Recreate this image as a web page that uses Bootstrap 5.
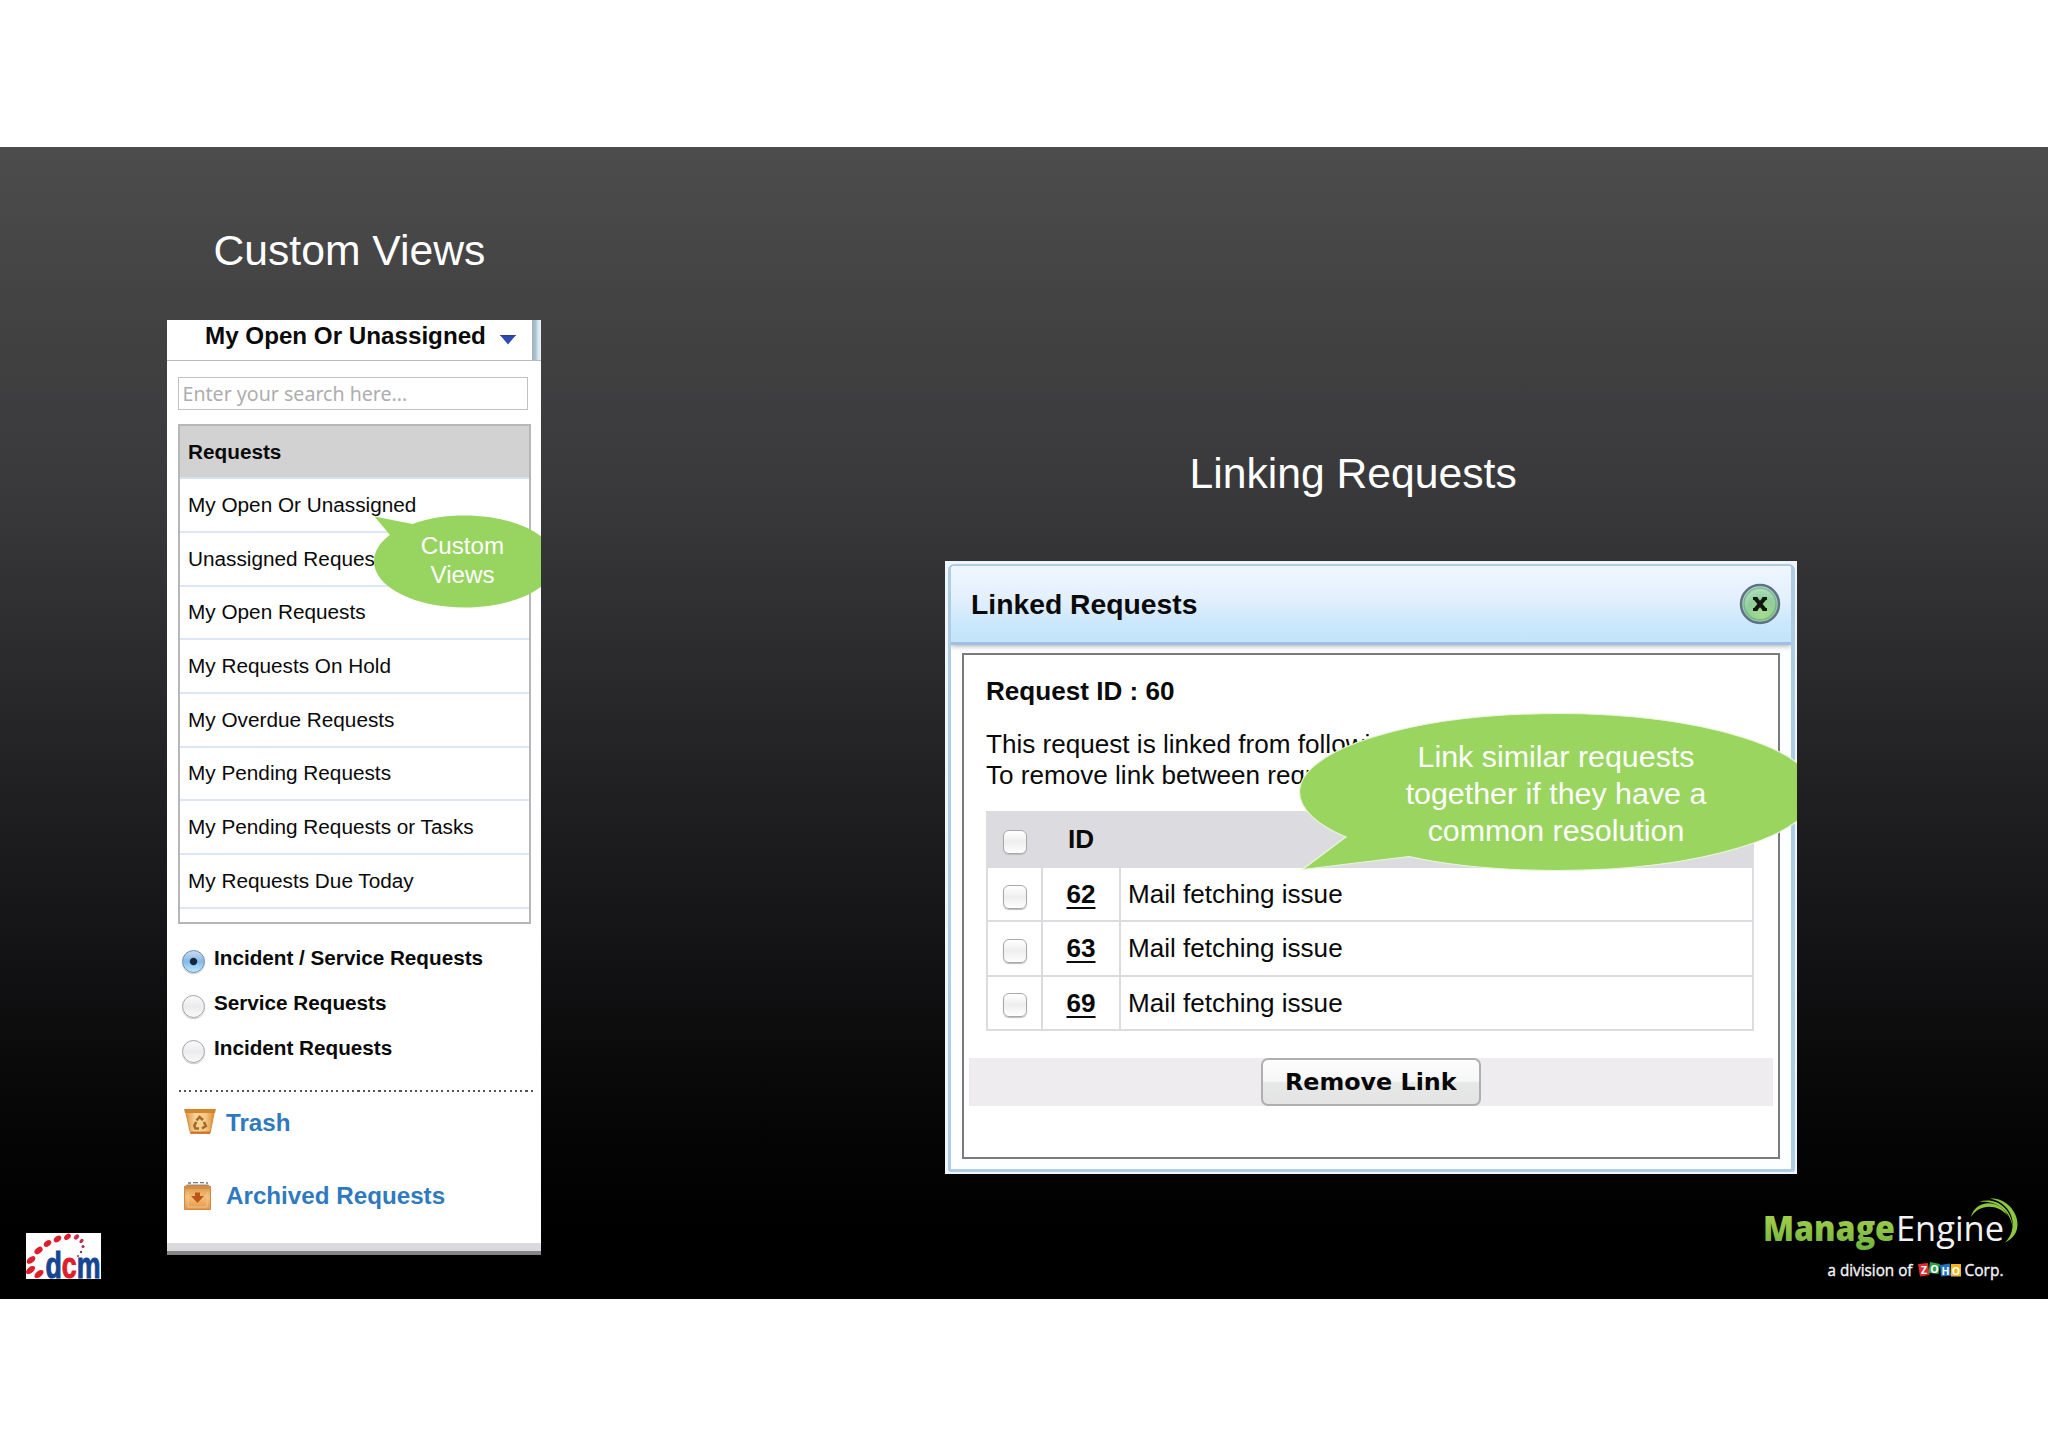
<!DOCTYPE html>
<html lang="en">
<head>
<meta charset="utf-8">
<title>Custom Views and Linking Requests</title>
<link href="https://cdn.jsdelivr.net/npm/bootstrap@5.3.0/dist/css/bootstrap.min.css" rel="stylesheet">
<style>
body{font-family:"Liberation Sans",Arial,sans-serif;color:#0a0a0a;background:#fff}
.page-wrap{height:1447px;padding-top:147px;overflow:hidden}
.slide{height:1152px;background:linear-gradient(#4c4c4c 0,#39383a 30%,#1d1c1e 59%,#060607 84%,#000 94%)}
.slide-title{font-size:42.67px;line-height:48px;color:#fff;white-space:nowrap;margin:0;font-weight:400}
.brand-left{width:167px;padding:0 0 20px 26px}
.views-col{width:374px;padding-top:79px}
.views-col .slide-title{padding-left:46.5px;margin-bottom:46px}
.views-panel{height:935px;background:#fff;overflow:hidden}
.views-head{height:41px;border-bottom:1px solid #b9b9bc;padding-left:38px;font-size:24.2px;line-height:31px}
.views-head svg{margin:15px 0 0 14px}
.head-edge{width:9px;height:40px;background:linear-gradient(90deg,#a9b1b6,#a7c0cd 35%,#d5e6ef 70%,#e9f2f7)}
.search-box{margin:16px 0 0 10.5px;width:350px;height:33px;border:1.5px solid #c2c2c5;border-radius:0;padding:0 0 0 4px;font:19.6px/30px "Noto Sans","Open Sans",sans-serif;color:#333}
.search-box::placeholder{color:#adadb0;opacity:1}
.view-list{margin:14px 0 0 10.5px;width:353px;height:500px;border:2px solid #b7b7ba;border-radius:0;overflow:hidden;font-size:20.75px}
.view-list .list-group-item{height:53.67px;flex:none;padding:0 0 0 8.5px;border:0;border-bottom:2px solid #dbe7f6;color:#0a0a0a;line-height:24px;display:flex;align-items:center;border-radius:0}
.view-list .list-title{height:53.3px;background:#d3d2d3;font-weight:700;border-bottom-color:#d3e3ee}
.kinds{margin-top:11px;padding-left:15px;font-size:20.7px;font-weight:700}
.kinds label{height:45px;gap:9px}
.kinds .form-check-input{width:23px;height:23px;margin:8px 0 0;border:1.5px solid #a4a4a8;background:linear-gradient(#fbfbfc,#ebebed 50%,#fafafa);box-shadow:0 1px 1px #ccc}
.kinds .form-check-input:checked{border-color:#7689a5;background:radial-gradient(circle,#14283e 0 3.2px,transparent 4.2px),linear-gradient(#c9dcf1,#85b9e8 50%,#b9eaff)}
.dots{margin:20px 0 0 12px;width:356px;height:2px;background:repeating-linear-gradient(90deg,#555 0 2px,transparent 2px 5.25px)}
.side-link{color:#2f7abf;font-size:24.2px;font-weight:700;text-decoration:none;padding-left:17px;height:62px}
.side-link svg{width:32px;margin-right:10px}
.side-link+.side-link{height:84px}
.panel-foot{height:12px;background:linear-gradient(#dadadc 0 7.5px,#858587 7.5px)}
.views-bubble{left:206px;top:194px;width:180px;height:96px}
.bubble-copy{color:#fff;text-align:center}
.views-bubble .bubble-copy{left:0;width:179px;top:17px;font-size:24.2px;line-height:29.4px}
.link-col{margin-left:404px;width:1103px;padding-top:302px}
.link-col .slide-title{padding-left:244.5px;margin-bottom:64px}
.link-panel{width:851.5px;height:613px;background:#eef6fb;padding:3px 2px 2px 3px;overflow:hidden}
.link-frame{border:solid #afcde2;border-width:2px 4px 3px 3px;border-radius:6px 6px 3px 3px;background:#fcfeff;overflow:hidden}
.link-head{height:79px;border-bottom:3px solid #9fc0e2;background:linear-gradient(#eff7ff,#e2effc 45%,#c9e7fd 78%,#c3e4fa);padding:0 10px 0 20px;font-size:28.3px;box-shadow:0 1px 5px #aaa}
.link-box{margin:8px 11px 0 11px;height:506px;border:2px solid #7b7b7f;background:#fff;padding-top:21px;font-size:26.1px;line-height:30.3px}
.link-box p{margin:0 0 0 22px;white-space:nowrap}
.link-box .link-note{margin-top:23px}
.link-table{margin:21px 0 0 22px;width:768px;border-collapse:collapse}
.link-table td,.link-table th{border:2px solid #dcdce0;height:54.4px;padding:0;line-height:30px;vertical-align:middle}
.link-table th{background:#dcdce0;height:55px}
.link-table .pick{width:55px;text-align:center}
.link-table .num{width:78px;text-align:center;font-weight:700}
.link-table .topic{padding-left:7px}
.link-table .num a{color:inherit;text-decoration:underline;text-decoration-thickness:2px;text-underline-offset:4px;text-decoration-skip-ink:none}
.link-table .form-check-input{width:24px;height:24px;margin:1px 0 0;border:1.5px solid #a9a9ad;border-radius:6px;background:linear-gradient(#fff,#eee 50%,#fff);display:inline-block;vertical-align:middle;box-shadow:0 1px 1px #bbb}
.link-actions{margin:27px 5px 0;height:48px;background:#eeecee}
.btn-remove{width:220px;height:48px;padding:0;border:2px solid #afafb1;border-radius:7px;font:700 23.8px/42px "DejaVu Sans",sans-serif;background:linear-gradient(#fdfdfd 0,#f6f6f6 48%,#e6e7e7 52%,#e4e4e4 100%);color:#080808}
.link-bubble{left:353px;top:151px;width:520px;height:162px}
.link-bubble .bubble-copy{left:0;width:516px;top:26px;font-size:30.4px;line-height:37.1px}
.brand-right{margin:18px 0 0 810px}
</style>
</head>
<body>
<div class="page-wrap">
<main class="slide d-flex align-items-start">
  <div class="brand-left align-self-end">
    <svg class="d-block overflow-visible" width="75" height="46" viewBox="0 0 75 46" aria-label="dcm">
      <rect width="75" height="46" fill="#fff"/>
      <g fill="#e01d2b">
        <ellipse cx="13" cy="41" rx="5.3" ry="3" transform="rotate(-40 13 41)"/>
        <ellipse cx="4.5" cy="37" rx="5.3" ry="3" transform="rotate(-40 4.5 37)"/>
        <ellipse cx="5" cy="27" rx="5" ry="3" transform="rotate(-38 5 27)"/>
        <ellipse cx="12.5" cy="17.5" rx="4.6" ry="3" transform="rotate(-38 12.5 17.5)"/>
        <ellipse cx="21.5" cy="10.5" rx="4.2" ry="2.7" transform="rotate(-38 21.5 10.5)"/>
        <ellipse cx="31.5" cy="6" rx="4.2" ry="2.7" transform="rotate(-38 31.5 6)"/>
        <ellipse cx="41.5" cy="3.8" rx="3.8" ry="2.5" transform="rotate(-38 41.5 3.8)"/>
      </g>
      <g fill="#c4304e"><ellipse cx="50.5" cy="4" rx="3" ry="2.1" transform="rotate(-45 50.5 4)"/><ellipse cx="55.5" cy="8" rx="2.5" ry="1.7" transform="rotate(-45 55.5 8)"/></g>
      <g fill="#94335f"><circle cx="57" cy="13.5" r="1.5"/><circle cx="55" cy="19" r="1.2"/><circle cx="52" cy="23" r="1"/></g>
      <text x="19.5" y="45" textLength="55" lengthAdjust="spacingAndGlyphs" font-family="Liberation Sans" font-weight="700" font-size="36" stroke-width="1" fill="#164493" stroke="#164493">d<tspan fill="#e01d2b" stroke="#e01d2b">c</tspan>m</text>
    </svg>
  </div>

  <section class="views-col">
    <h1 class="slide-title">Custom Views</h1>
    <div class="views-panel position-relative d-flex flex-column">
      <div class="views-head d-flex fw-bold flex-shrink-0">
        <span class="text-nowrap">My Open Or Unassigned</span>
        <svg width="16" height="10" viewBox="0 0 16 10"><path d="M0 0h16L8 9.500z" fill="#2c4db5"/><path d="M0 0h16l-1.500 1.500h-13z" fill="#31418a"/></svg>
        <span class="head-edge ms-auto"></span>
      </div>
      <input class="search-box form-control flex-shrink-0" type="text" placeholder="Enter your search here...">
      <div class="view-list list-group flex-shrink-0">
        <div class="list-group-item list-title">Requests</div>
        <div class="list-group-item">My Open Or Unassigned</div>
        <div class="list-group-item">Unassigned Requests</div>
        <div class="list-group-item">My Open Requests</div>
        <div class="list-group-item">My Requests On Hold</div>
        <div class="list-group-item">My Overdue Requests</div>
        <div class="list-group-item">My Pending Requests</div>
        <div class="list-group-item">My Pending Requests or Tasks</div>
        <div class="list-group-item">My Requests Due Today</div>
      </div>
      <div class="kinds">
        <label class="d-flex align-items-center"><input class="form-check-input" type="radio" name="kind" checked>Incident / Service Requests</label>
        <label class="d-flex align-items-center"><input class="form-check-input" type="radio" name="kind">Service Requests</label>
        <label class="d-flex align-items-center"><input class="form-check-input" type="radio" name="kind">Incident Requests</label>
      </div>
      <div class="dots flex-shrink-0"></div>
      <a class="side-link d-flex align-items-center" href="#">
        <svg height="28" viewBox="0 0 32 28">
          <defs><linearGradient id="bin" x2="1"><stop stop-color="#dd9645"/><stop offset=".35" stop-color="#f6d79a"/><stop offset=".7" stop-color="#f3c980"/><stop offset="1" stop-color="#d98b36"/></linearGradient></defs>
          <path d="M1.500 2h29l-4.500 22.500H6.500z" fill="url(#bin)" stroke="#d58a3b"/>
          <path d="M0 0h32l-1 4H1z" fill="#d6852f"/>
          <path d="M7 23.500h19" stroke="#c9772a" stroke-width="2"/>
          <path d="M12.500 11.500l3-3.500 3.500 3M20 13l1.800 4-3.800 2.500M15 19.500h-3.500l-1.200-3 2-3.500" fill="none" stroke="#a6682d" stroke-width="2.600"/>
        </svg>Trash</a>
      <a class="side-link d-flex align-items-center" href="#">
        <svg height="28" viewBox="0 0 32 28">
          <defs><linearGradient id="box" x2="0" y2="1"><stop stop-color="#df9a4e"/><stop offset=".45" stop-color="#f3c077"/><stop offset="1" stop-color="#e3954a"/></linearGradient></defs>
          <path d="M3 2.500h21L27 5H0z" fill="#a98a68"/>
          <path d="M4 1h3m2-.5h5m2 0h4m2 .5h2" stroke="#777" stroke-width="1.400"/>
          <path d="M.5 5h26v22.500H.5z" fill="url(#box)" stroke="#d18a45"/>
          <path d="M0 4h27v3H0z" fill="#d58d44"/>
          <path d="M4 10v15h19V10" fill="none" stroke="#efc58b"/>
          <path d="M11 10.500h5v3.500h4L13.500 21 7 14h4z" fill="#bb5716"/>
        </svg>Archived Requests</a>
      <div class="panel-foot mt-auto flex-shrink-0"></div>
      <div class="views-bubble position-absolute">
        <svg class="d-block" width="180" height="96" viewBox="0 0 180 96"><path d="M1.500 2.500L39.500 10C55 4 73 1.500 92 1.500c50.300 0 91 20.600 91 46s-40.700 46-91 46-91-20.600-91-46c0-10 6-19.500 16-26.500z" fill="#97d460"/></svg>
        <div class="bubble-copy position-absolute">Custom<br>Views</div>
      </div>
    </div>
  </section>

  <section class="link-col">
    <h1 class="slide-title">Linking Requests</h1>
    <div class="link-panel position-relative">
      <div class="link-frame h-100">
        <div class="link-head d-flex align-items-center justify-content-between fw-bold">
          <span>Linked Requests</span>
          <svg width="42" height="42" viewBox="0 0 42 42">
            <defs><radialGradient id="orb" cx=".55" cy=".75" r=".8"><stop stop-color="#a5dc8c"/><stop offset=".5" stop-color="#8fcd9a"/><stop offset="1" stop-color="#c2e6d4"/></radialGradient></defs>
            <circle cx="21" cy="21" r="19" fill="url(#orb)" stroke="#5d7288" stroke-width="2.500"/>
            <circle cx="21" cy="21" r="16" fill="none" stroke="#6fa583" stroke-width="1.500" opacity=".7"/>
            <path d="M16.500 15.500l9 11m0-11l-9 11" stroke="#10180f" stroke-width="4.200"/>
            <path d="M14 15.500h4.500m5 0H28M14 26.500h4.500m5 0H28" stroke="#10180f" stroke-width="2.800"/>
          </svg>
        </div>
        <div class="link-box">
          <p class="fw-bold">Request ID : 60</p>
          <p class="link-note">This request is linked from following<br>To remove link between requests</p>
          <table class="link-table">
            <tr><th class="pick"><input class="form-check-input" type="checkbox"></th><th class="num">ID</th><th></th></tr>
            <tr><td class="pick"><input class="form-check-input" type="checkbox"></td><td class="num"><a href="#">62</a></td><td class="topic">Mail fetching issue</td></tr>
            <tr><td class="pick"><input class="form-check-input" type="checkbox"></td><td class="num"><a href="#">63</a></td><td class="topic">Mail fetching issue</td></tr>
            <tr><td class="pick"><input class="form-check-input" type="checkbox"></td><td class="num"><a href="#">69</a></td><td class="topic">Mail fetching issue</td></tr>
          </table>
          <div class="link-actions d-flex justify-content-center"><button class="btn btn-remove" type="button">Remove Link</button></div>
        </div>
      </div>
      <div class="link-bubble position-absolute">
        <svg class="d-block" width="520" height="162" viewBox="0 0 520 162"><path d="M4.500 157.500L48 125C19 113 1.500 97 1.500 80c0-43.400 115.500-78.500 258-78.500s258 35.100 258 78.500-115.500 78.500-258 78.500c-56 0-108-5-148.500-14z" fill="#99d55f" stroke="#e9f7d9" stroke-width="1.200"/></svg>
        <div class="bubble-copy position-absolute">Link similar requests<br>together if they have a<br>common resolution</div>
      </div>
    </div>
    <svg class="brand-right d-block" width="275" height="100" viewBox="1755 1192 275 100" aria-label="ManageEngine">
      <defs><linearGradient id="leaf" x2="0" y2="1"><stop offset=".2" stop-color="#a5cf4c"/><stop offset="1" stop-color="#6cb33f"/></linearGradient></defs>
      <g font-family="Open Sans" font-size="34.500">
        <text x="1763" y="1241.300" font-weight="800" textLength="132" lengthAdjust="spacingAndGlyphs" fill="url(#leaf)">Manage</text>
        <text x="1896" y="1241.300" textLength="108" lengthAdjust="spacingAndGlyphs" fill="#f2f2f4">Engine</text>
      </g>
      <g fill="#8dc63f">
        <path d="M1971 1217c4-17 28-19 37-1-11-13-29-12-37 1z"/>
        <path d="M1979 1202c14-5 32 3 34 26-3-18-17-28-34-26z"/>
        <path d="M1990 1198.500c24-2 40 33 15 44 14-13 9-39-15-44z"/>
      </g>
      <g font-family="Open Sans" font-size="16.500" fill="#f4f4f4" stroke="#f4f4f4" stroke-width=".4">
        <text x="1827.500" y="1276" textLength="85" lengthAdjust="spacingAndGlyphs">a division of</text>
        <text x="1964.500" y="1276" textLength="39" lengthAdjust="spacingAndGlyphs">Corp.</text>
      </g>
      <path d="M1918 1264l10-1 1.500 12-9.500 1.500z" fill="#e02b32"/>
      <path d="M1930 1262l10 2-1.500 10-10-1z" fill="#2aa24c"/>
      <path d="M1940 1265l10-1.500 1 12-10 1z" fill="#2273c4"/>
      <path d="M1951 1264h10v12.500h-10z" fill="#f3b51d"/>
      <g font-family="Open Sans" font-weight="700" font-size="10.500" fill="#fff" text-anchor="middle"><text x="1924" y="1274">Z</text><text x="1934.500" y="1272.500">O</text><text x="1945.500" y="1274.500">H</text><text x="1956" y="1274.500">O</text></g>
    </svg>
  </section>
</main>
</div>
<script src="https://cdn.jsdelivr.net/npm/bootstrap@5.3.0/dist/js/bootstrap.bundle.min.js"></script>
</body>
</html>
